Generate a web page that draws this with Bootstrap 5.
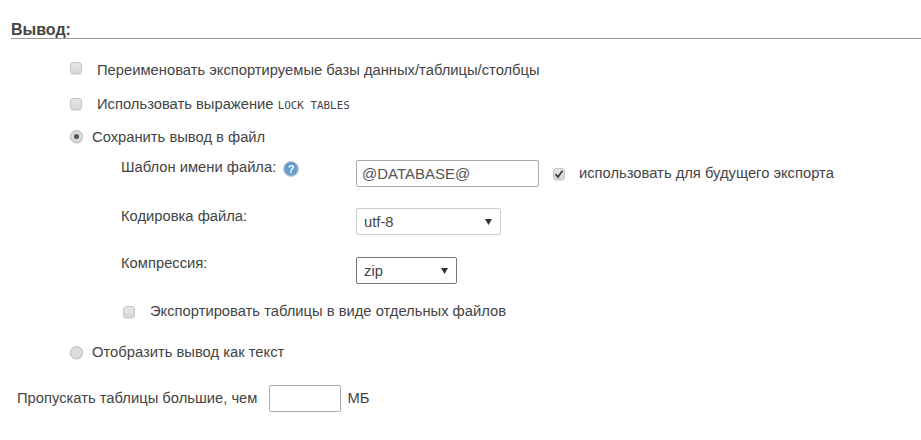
<!DOCTYPE html>
<html lang="ru">
<head>
<meta charset="utf-8">
<title>Вывод</title>
<link href="https://cdn.jsdelivr.net/npm/bootstrap@5.3.0/dist/css/bootstrap.min.css" rel="stylesheet">
<style>
html, body { background: #fff; }
body { font-family: "Liberation Sans", Arial, sans-serif; font-size: 14.75px; line-height: 17px; color: #444; width: 921px; height: 440px; overflow: hidden; }
.out-head { margin: 21px 0 0 11px; height: 18px; font-size: 16px; font-weight: 700; line-height: 17px; border-bottom: 1px solid #999; color: #444; }
.opt-row { margin-left: 70px; height: 17px; }
.fake-box { flex: none; width: 12px; height: 12px; border: 1px solid #c4c4c4; border-radius: 3px; background: linear-gradient(#e6e6e6, #d8d8d8); box-shadow: 0 1px 1px rgba(0,0,0,.1); display: flex; align-items: center; justify-content: center; }
.fake-round { flex: none; width: 13px; height: 13px; border: 1px solid #b8b8b8; border-radius: 50%; background: #dcdcdc; box-shadow: 0 1px 1px rgba(0,0,0,.1); display: flex; align-items: center; justify-content: center; }
.fake-round i { width: 5px; height: 5px; border-radius: 50%; background: #555; display: block; }
.lock-code { font-family: "DejaVu Sans Mono", monospace; font-size: 10.9px; color: #444; }
.r1 { margin-top: 23px; }
.r2 { margin-top: 17px; }
.r3 { margin-top: 16px; }
.r1 .fake-box, .r2 .fake-box { margin-right: 15px; }
.r2 .fake-box { margin-top: 2px; }
.r3 .fake-round { margin-top: 1px; }
.r3 .fake-round, .r-text .fake-round { margin-right: 9px; }
.sub-area { margin-left: 121px; }
.field-row { display: flex; }
.row-name { margin-top: 14px; }
.row-enc { margin-top: 21px; }
.row-comp { margin-top: 22px; }
.field-lab { width: 235px; flex: none; }
.lab-name { margin-top: -1px; }
.lab-comp { margin-top: -2px; }
.txt-in { width: 183px; height: 27px; border: 1px solid #aaa; border-radius: 2px; background: #fff; color: #555; font-size: 15px; padding: 0 5px; outline: 0; }
.keep-opt { margin-left: 14px; height: 27px; }
.keep-opt .fake-box { margin-right: 14px; }
.sel-box { height: 27px; border-radius: 2px; background: #fff; color: #444; padding: 0 8px 0 7px; font-size: 14.75px; line-height: 26px; }
.sel-enc { width: 145px; border: 1px solid #ccc; }
.sel-comp { width: 101px; border: 1px solid #777; }
.help-ico { margin-left: 7px; margin-top: 2px; }
.export-row { margin-top: 19px; height: 17px; }
.export-row .fake-box { margin-left: 2px; margin-right: 15px; }
.r-text { margin-left: 70px; height: 17px; margin-top: 24px; }
.last-row { margin: 24px 0 0 17px; height: 27px; }
.size-in { width: 72px; height: 27px; border: 1px solid #aaa; border-radius: 2px; margin: 0 6px 0 12px; background: #fff; outline: 0; }
</style>
</head>
<body>
<div class="out-head">Вывод:</div>

<div class="opt-row r1 d-flex align-items-start"><span class="fake-box"></span><span>Переименовать экспортируемые базы данных/таблицы/столбцы</span></div>
<div class="opt-row r2 d-flex align-items-start"><span class="fake-box"></span><span>Использовать выражение <code class="lock-code">LOCK TABLES</code></span></div>
<div class="opt-row r3 d-flex align-items-start"><span class="fake-round"><i></i></span><span>Сохранить вывод в файл</span></div>

<div class="sub-area">
  <div class="field-row row-name">
    <div class="field-lab lab-name d-flex align-items-start"><span>Шаблон имени файла:</span>
      <svg class="help-ico" width="16" height="16" viewBox="0 0 16 16"><defs><radialGradient id="hg" cx="50%" cy="45%" r="60%"><stop offset="0" stop-color="#5f93cb"/><stop offset=".7" stop-color="#6f9ccb"/><stop offset="1" stop-color="#b4cbe2"/></radialGradient></defs><circle cx="8" cy="8" r="7.5" fill="url(#hg)" stroke="#b9cbdd" stroke-width=".8"/><text x="8" y="12" font-family="Liberation Sans" font-size="11" font-weight="700" text-anchor="middle" fill="#fff">?</text></svg>
    </div>
    <input class="txt-in" value="@DATABASE@">
    <div class="keep-opt d-flex align-items-center">
      <span class="fake-box"><svg width="10" height="10" viewBox="0 0 10 10"><path d="M1.5 5.2 4 8 8.5 1.8" fill="none" stroke="#444" stroke-width="1.9"/></svg></span>
      <span>использовать для будущего экспорта</span>
    </div>
  </div>
  <div class="field-row row-enc">
    <div class="field-lab">Кодировка файла:</div>
    <div class="sel-box sel-enc d-flex justify-content-between align-items-center"><span>utf-8</span><svg width="7" height="6" viewBox="0 0 7 6"><path d="M0 0H7L3.5 6Z" fill="#333"/></svg></div>
  </div>
  <div class="field-row row-comp">
    <div class="field-lab lab-comp">Компрессия:</div>
    <div class="sel-box sel-comp d-flex justify-content-between align-items-center"><span>zip</span><svg width="7" height="6" viewBox="0 0 7 6"><path d="M0 0H7L3.5 6Z" fill="#333"/></svg></div>
  </div>
  <div class="export-row d-flex align-items-center">
    <span class="fake-box"></span><span>Экспортировать таблицы в виде отдельных файлов</span>
  </div>
</div>

<div class="r-text d-flex align-items-center"><span class="fake-round"></span><span>Отобразить вывод как текст</span></div>

<div class="last-row d-flex align-items-center"><span>Пропускать таблицы большие, чем</span><input class="size-in"><span>МБ</span></div>
</body>
</html>
